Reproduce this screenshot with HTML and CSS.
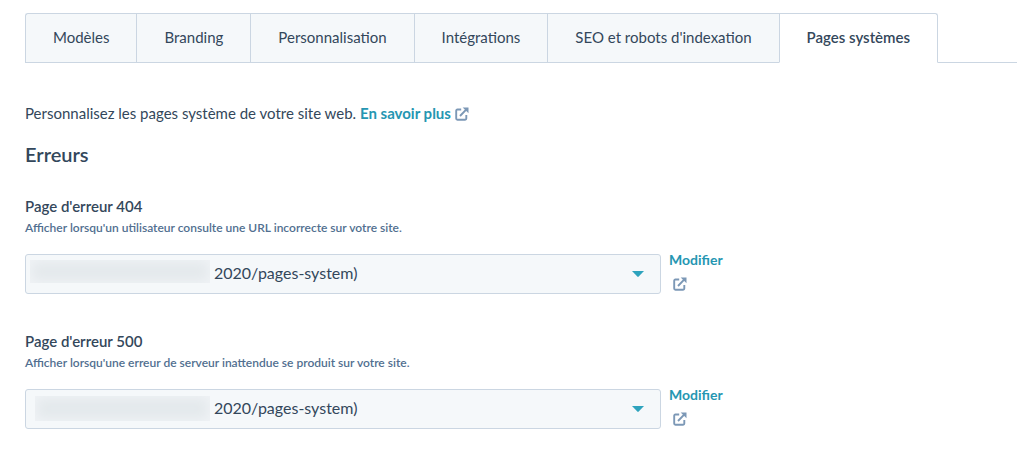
FILE: index.html
```html
<!DOCTYPE html>
<html lang="fr">
<head>
<meta charset="utf-8">
<meta name="viewport" content="width=device-width, initial-scale=1">
<title>Pages systèmes</title>
<link rel="stylesheet" href="styles.css">
</head>
<body>
<svg class="sprite" aria-hidden="true">
  <symbol id="external" viewBox="0 0 14 14">
    <path d="M6.2 2.5H2.4Q1.2 2.5 1.2 3.7v7.9q0 1.2 1.2 1.2h7.7q1.2 0 1.2-1.2V8M5 9l6.4-6.6" fill="none" stroke="currentColor" stroke-width="1.9"/>
    <path d="M7.7.5h5.8v5.8z" fill="currentColor"/>
  </symbol>
</svg>
<nav class="tabs" aria-label="Paramètres">
  <a class="tab" href="#modeles">Modèles</a>
  <a class="tab" href="#branding">Branding</a>
  <a class="tab" href="#personnalisation">Personnalisation</a>
  <a class="tab" href="#integrations">Intégrations</a>
  <a class="tab" href="#seo">SEO et robots d'indexation</a>
  <a class="tab tab-active" href="#pages" aria-current="page">Pages systèmes</a>
</nav>
<main class="content">
  <p class="intro">Personnalisez les pages système de votre site web. <a class="link" href="#aide">En savoir plus <svg class="icon"><use href="#external"/></svg></a></p>
  <h1 class="heading">Erreurs</h1>
  <section class="field">
    <label class="label" for="page-404">Page d'erreur 404</label>
    <p class="help">Afficher lorsqu'un utilisateur consulte une URL incorrecte sur votre site.</p>
    <div class="row">
      <div class="picker">
        <select class="select" id="page-404"><option>2020/pages-system)</option></select>
        <span class="mask mask-first"></span>
        <svg class="caret" viewBox="0 0 12 6" aria-hidden="true"><path d="M0 0h12L6.7 5.6q-.7.6-1.4 0z"/></svg>
      </div>
      <a class="link edit" href="#modifier-404">Modifier <svg class="icon"><use href="#external"/></svg></a>
    </div>
  </section>
  <section class="field">
    <label class="label" for="page-500">Page d'erreur 500</label>
    <p class="help">Afficher lorsqu'une erreur de serveur inattendue se produit sur votre site.</p>
    <div class="row">
      <div class="picker">
        <select class="select" id="page-500"><option>2020/pages-system)</option></select>
        <span class="mask mask-second"></span>
        <svg class="caret" viewBox="0 0 12 6" aria-hidden="true"><path d="M0 0h12L6.7 5.6q-.7.6-1.4 0z"/></svg>
      </div>
      <a class="link edit" href="#modifier-500">Modifier <svg class="icon"><use href="#external"/></svg></a>
    </div>
  </section>
</main>
</body>
</html>
```
FILE: styles.css
```css
* { box-sizing: border-box; }
body {
  margin: 0;
  padding: 13px 0 0 25px;
  background: #fff;
  color: #33475b;
  font: 15px/24px Lato, "Open Sans", sans-serif;
}
.sprite { display: none; }
.tabs { display: flex; }
.tabs::after {
  content: "";
  flex: 1;
  border-bottom: 1px solid #cbd6e2;
}
.tab {
  padding: 11px 27px 13px;
  border: 1px solid #cbd6e2;
  border-right: 0;
  background: #f5f8fa;
  color: #33475b;
  text-decoration: none;
  white-space: nowrap;
}
.tab:first-child { border-top-left-radius: 3px; }
.tab-active {
  border-right: 1px solid #cbd6e2;
  border-bottom-color: #fff;
  border-top-right-radius: 3px;
  background: #fff;
  font-weight: 600;
}
.content { padding-top: 38px; }
.intro { margin: 0; }
.link {
  color: #2596b2;
  font-weight: 700;
  text-decoration: none;
}
.icon {
  width: 14px;
  height: 14px;
  color: #7c98b6;
  vertical-align: -2px;
}
.heading {
  margin: 15px 0 26px;
  font-size: 20px;
  font-weight: 600;
  line-height: 28px;
}
.field { margin-bottom: 35px; }
.label {
  display: block;
  font-weight: 600;
}
.help {
  margin: 0 0 16px;
  color: #516f90;
  font-size: 12px;
  font-weight: 600;
  line-height: 20px;
}
.row {
  display: flex;
  gap: 8px;
}
.picker {
  position: relative;
  flex: 0 1 636px;
}
.select {
  display: block;
  width: 100%;
  height: 40px;
  padding: 0 40px 2px 188px;
  border: 1px solid #cbd6e2;
  border-radius: 3px;
  background: #f5f8fa;
  color: #33475b;
  font: inherit;
  font-size: 16px;
  appearance: none;
}
.mask {
  position: absolute;
  left: 5px;
  top: 6px;
  width: 180px;
  height: 23px;
  background: #e4e9ec;
  box-shadow: inset 0 0 12px 2px #f0f3f6;
  pointer-events: none;
}
.mask-second {
  left: 10px;
  top: 7px;
  width: 175px;
  height: 25px;
}
.caret {
  position: absolute;
  right: 17px;
  top: 17px;
  width: 12px;
  height: 6px;
  fill: #2ea3bd;
  pointer-events: none;
}
.edit {
  display: flex;
  flex-direction: column;
  gap: 11px;
  font-size: 14px;
  line-height: 12px;
}
.edit .icon { margin-left: 4px; }
```
